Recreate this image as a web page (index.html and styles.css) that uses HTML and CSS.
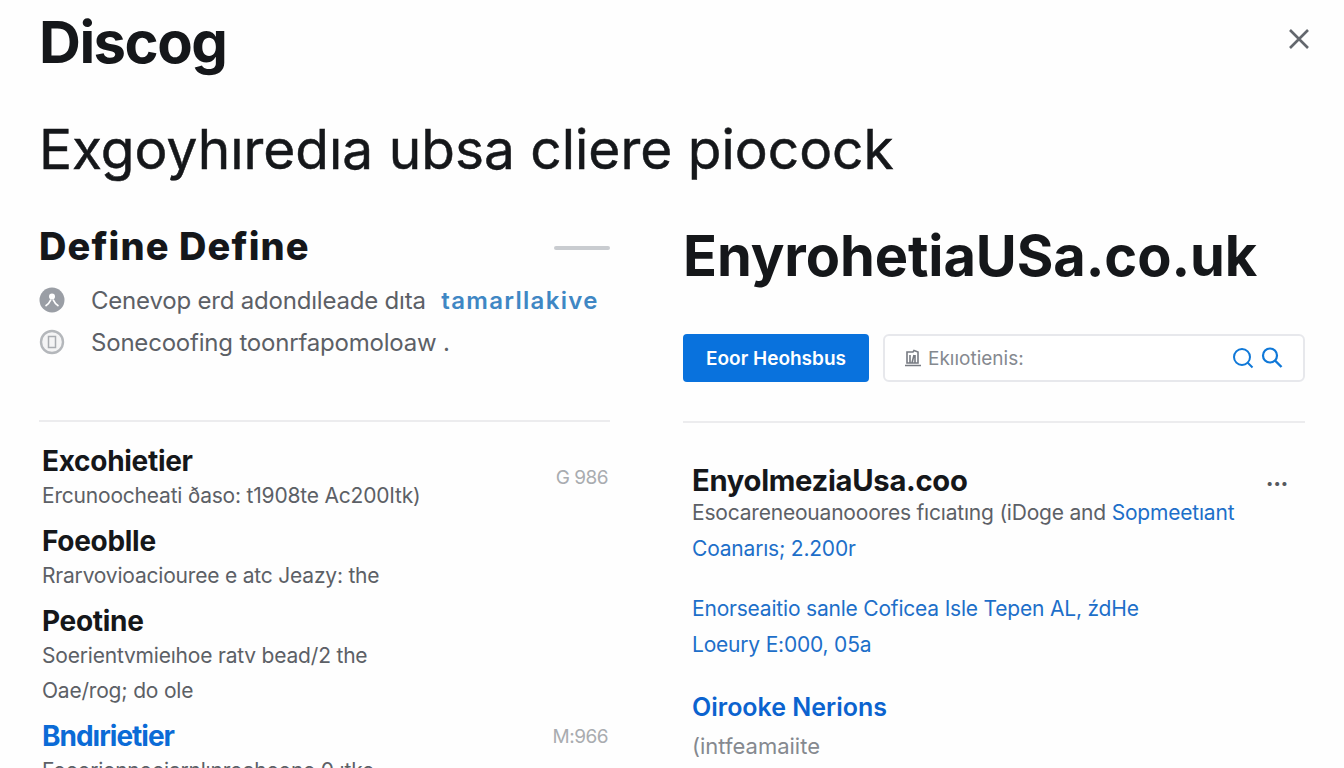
FILE: index.html
```html
<!DOCTYPE html>
<html lang="en">
<head>
    <meta charset="UTF-8">
    <meta name="viewport" content="width=device-width, initial-scale=1.0">
    <title>Discog</title>
    <link rel="stylesheet" href="styles.css">
</head>
<body>
    <div class="page">
        <header class="top-bar">
            <h1 class="logo">Discog</h1>
            <button class="close-btn" aria-label="Close">
                <svg width="22" height="22" viewBox="0 0 22 22"><path d="M2 2 L20 20 M20 2 L2 20" stroke="#63676d" stroke-width="2.6" fill="none"/></svg>
            </button>
        </header>

        <h2 class="headline">Exgoyhıredıa ubsa cliere piocock</h2>

        <div class="columns">
            <section class="left-col">
                <div class="define-head">
                    <h3 class="define-title">Define Define</h3>
                    <span class="dash"></span>
                </div>
                <ul class="facts">
                    <li class="fact">
                        <svg class="fact-icon" width="26" height="26" viewBox="0 0 26 26"><circle cx="13" cy="13" r="12.5" fill="#9a9ea5"/><circle cx="13" cy="9.5" r="3" fill="#fff"/><path d="M6.5 19 Q10 17 12 12.5 M19.5 19 Q16 17 14 12.5" stroke="#fff" stroke-width="1.8" fill="none"/></svg>
                        <span>Cenevop erd adondıleade dıta <span class="fact-link">tamarllakive</span></span>
                    </li>
                    <li class="fact">
                        <svg class="fact-icon" width="26" height="26" viewBox="0 0 26 26"><circle cx="13" cy="13" r="11" fill="#f4f4f5" stroke="#b4b7bb" stroke-width="2.4"/><rect x="9.5" y="7.5" width="7" height="11" fill="none" stroke="#a9acb1" stroke-width="1.5"/></svg>
                        <span>Sonecoofing toonrfapomoloaw .</span>
                    </li>
                </ul>

                <div class="entries">
                    <div class="entry">
                        <div class="entry-head"><h4 class="entry-title">Excohietier</h4><span class="entry-meta low">G 986</span></div>
                        <p class="entry-text">Ercunoocheati ðaso: t1908te Ac200Itk)</p>
                    </div>
                    <div class="entry">
                        <h4 class="entry-title">Foeoblle</h4>
                        <p class="entry-text">Rrarvovioaciouree e atc Jeazy: the</p>
                    </div>
                    <div class="entry">
                        <h4 class="entry-title">Peotine</h4>
                        <p class="entry-text">Soerientvmieıhoe ratv bead/2 the</p>
                        <p class="entry-text">Oae/rog; do ole</p>
                    </div>
                    <div class="entry">
                        <div class="entry-head"><h4 class="entry-title accent">Bndırietier</h4><span class="entry-meta">M:966</span></div>
                        <p class="entry-text">Foeoriennoeiarnlınroaheone 0 ıtke</p>
                    </div>
                </div>
            </section>

            <section class="right-col">
                <h2 class="domain">EnyrohetiaUSa.co.uk</h2>
                <div class="search-row">
                    <button class="primary-btn">Eoor Heohsbus</button>
                    <div class="search-box">
                        <svg class="bank-icon" width="18" height="18" viewBox="0 0 18 18"><path d="M3 3 H9 L10 1.5 L14 3 V14 H3 Z M6 6 V14 M10 6 L8 14 M11 6 V14 M1 16.5 H17" stroke="#777b82" stroke-width="1.6" fill="none"/></svg>
                        <span class="search-text">Ekııotienis:</span>
                        <svg class="search-icon" width="22" height="22" viewBox="0 0 22 22"><circle cx="10" cy="10" r="8" stroke="#0f78d8" stroke-width="2" fill="none"/><path d="M15.5 15.5 L20.5 20.5" stroke="#0f78d8" stroke-width="2"/></svg>
                        <svg class="search-icon" width="22" height="22" viewBox="0 0 22 22"><circle cx="9" cy="8.5" r="7" stroke="#0f78d8" stroke-width="2.2" fill="none"/><path d="M14 13.5 L20.5 20" stroke="#0f78d8" stroke-width="2.4"/></svg>
                    </div>
                </div>

                <div class="result">
                    <div class="result-head">
                        <h4 class="result-title">EnyolmeziaUsa.coo</h4>
                        <span class="more">•••</span>
                    </div>
                    <p class="result-text">Esocareneouanooores fıcıatıng (iDoge and <span class="link">Sopmeetıant</span></p>
                    <p class="result-text link">Coanarıs; 2.200r</p>
                    <p class="result-text link gap-top">Enorseaitio sanle Coficea Isle Tepen AL, źdHe</p>
                    <p class="result-text link">Loeury E:000, 05a</p>
                    <h4 class="result-sub">Oiroоke Nerions</h4>
                    <p class="result-note">(intfeamaiite</p>
                </div>
            </section>
        </div>
    </div>
</body>
</html>
```

FILE: styles.css
```css
* {
    margin: 0;
    padding: 0;
    box-sizing: border-box;
}

html, body {
    height: 100%;
    overflow: hidden;
}

body {
    font-family: Inter, 'Liberation Sans', sans-serif;
    background: #fefefe;
    color: #15171a;
}

.page {
    height: 768px;
    overflow: hidden;
    padding: 0 39px;
}

.top-bar {
    display: flex;
    justify-content: space-between;
    align-items: center;
    height: 84px;
}

.logo {
    font-size: 58px;
    font-weight: 700;
    letter-spacing: -1.5px;
}

.close-btn {
    border: none;
    background: none;
    margin-right: -5px;
    display: flex;
    margin-top: -6px;
}

.headline {
    font-size: 55px;
    font-weight: 400;
    line-height: 60px;
    margin-top: 35px;
    -webkit-text-stroke: 0.5px #15171a;
}

.columns {
    display: grid;
    grid-template-columns: 571px 622px;
    gap: 73px;
    margin-top: 36px;
}

.define-head {
    display: flex;
    justify-content: space-between;
    align-items: center;
    height: 46px;
    margin-top: 8px;
}

.define-title {
    font-size: 38px;
    font-weight: 800;
    letter-spacing: 1.1px;
}

.dash {
    width: 56px;
    height: 4px;
    background: #c9ccd0;
    border-radius: 2px;
    margin-top: 3px;
}

.facts {
    list-style: none;
    margin-top: 10px;
}

.fact {
    display: flex;
    align-items: center;
    gap: 26px;
    height: 42px;
    font-size: 24px;
    letter-spacing: -0.2px;
    color: #5c6066;
    white-space: nowrap;
}

.fact-link {
    color: #3f87c4;
    font-weight: 600;
    letter-spacing: 1.3px;
    margin-left: 9px;
}

.entries {
    border-top: 2px solid #ececee;
    margin-top: 57px;
    padding-top: 22px;
}

.entry {
    padding-left: 3px;
    margin-bottom: 11px;
}

.entry-head {
    display: flex;
    justify-content: space-between;
    align-items: center;
}

.entry-title {
    font-size: 28px;
    font-weight: 700;
    line-height: 34px;
    letter-spacing: -0.3px;
}

.entry-title.accent {
    color: #0b6bd6;
    letter-spacing: -1px;
}

.entry-meta {
    font-size: 19px;
    color: #a9acb0;
    margin-right: 2px;
    letter-spacing: -0.5px;
}

/* first meta sits lower than its title */
.entry-meta.low {
    align-self: flex-end;
    margin-bottom: -11px;
}

.entry-text {
    font-size: 21px;
    line-height: 35px;
    color: #5c6066;
    letter-spacing: -0.2px;
}

.domain {
    font-size: 56px;
    font-weight: 700;
    letter-spacing: -0.1px;
    line-height: 68px;
    margin-top: 7px;
}

.search-row {
    display: flex;
    gap: 14px;
    margin-top: 44px;
}

.primary-btn {
    width: 186px;
    height: 48px;
    border: none;
    border-radius: 4px;
    background: #0972dd;
    color: #fff;
    font-family: inherit;
    font-size: 19px;
    font-weight: 600;
}

.search-box {
    flex: 1;
    height: 48px;
    border: 2px solid #e7e8ec;
    border-radius: 6px;
    background: #fff;
    display: flex;
    align-items: center;
    padding: 0 20px 0 19px;
}

.bank-icon {
    margin-right: 6px;
}

.search-text {
    flex: 1;
    font-size: 19px;
    color: #85898f;
}

.search-icon {
    margin-left: 7px;
}

.result {
    border-top: 2px solid #ececee;
    margin-top: 39px;
    padding: 42px 0 0 9px;
}

.result-head {
    display: flex;
    justify-content: space-between;
    align-items: center;
    height: 30px;
}

.result-title {
    font-size: 29.2px;
    font-weight: 700;
    letter-spacing: -0.3px;
}

.more {
    font-size: 13px;
    color: #55595f;
    margin-right: 17px;
    margin-top: 6px;
}

.result-text {
    font-size: 21px;
    line-height: 36px;
    color: #5c6066;
    letter-spacing: -0.2px;
}

.link {
    color: #1d6fc9;
}

.gap-top {
    margin-top: 24px;
}

.result-sub {
    font-size: 25px;
    font-weight: 600;
    color: #0b63cf;
    margin-top: 26px;
    line-height: 36px;
}

.result-note {
    font-size: 22px;
    line-height: 42px;
    color: #85898f;
}
```
